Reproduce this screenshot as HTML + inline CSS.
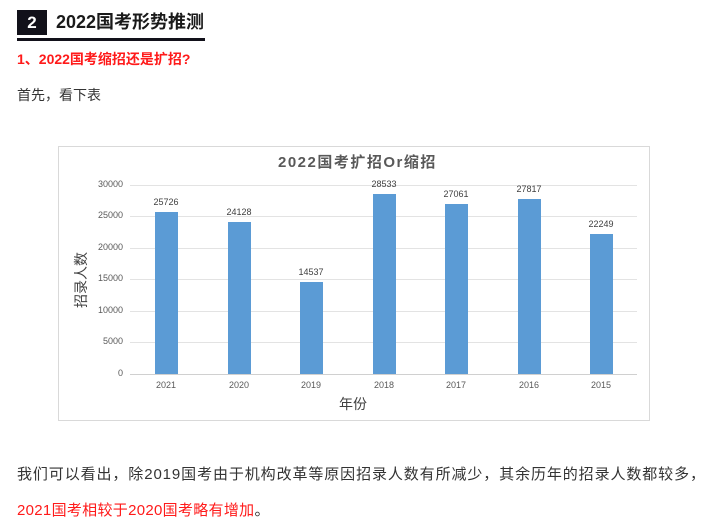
<!DOCTYPE html>
<html><head><meta charset="utf-8"><style>
body{margin:0;width:704px;height:526px;background:#fff;position:relative;overflow:hidden;font-family:"Liberation Sans","Noto Sans CJK SC",sans-serif;}
.a{position:absolute;white-space:nowrap;}
.g{position:absolute;left:130px;width:507px;height:1px;background:#e3e3e3;}
.yl{position:absolute;right:581px;font-size:9px;color:#595959;}
.bar{position:absolute;width:23px;background:#5b9bd5;}
.v{position:absolute;font-size:9px;color:#404040;width:50px;text-align:center;}
.x{position:absolute;top:380px;font-size:9px;color:#595959;width:50px;text-align:center;}
</style></head><body>
<div class="a" style="left:17px;top:10px;width:30px;height:25px;background:#12111a;color:#fff;font-weight:bold;font-size:17px;text-align:center;line-height:25px;">2</div>
<div class="a" style="left:56px;top:9px;font-weight:bold;font-size:18px;color:#1a1a1a;line-height:27px;">2022国考形势推测</div>
<div class="a" style="left:17px;top:38px;width:188px;height:3px;background:#12111a;"></div>
<div class="a" style="left:17px;top:49px;font-weight:bold;font-size:14px;color:#ff1a1a;line-height:20px;">1、2022国考缩招还是扩招?</div>
<div class="a" style="left:17px;top:85px;font-size:14px;color:#333;line-height:20px;">首先，看下表</div>

<div class="a" style="left:58px;top:146px;width:592px;height:275px;border:1px solid #d9d9d9;box-sizing:border-box;"></div>
<div class="a" style="left:278px;top:151px;font-weight:bold;font-size:15px;color:#595959;letter-spacing:1.5px;">2022国考扩招Or缩招</div>
<div class="g" style="top:185px"></div><div class="yl" style="top:179px">30000</div>
<div class="g" style="top:216px"></div><div class="yl" style="top:210px">25000</div>
<div class="g" style="top:248px"></div><div class="yl" style="top:242px">20000</div>
<div class="g" style="top:279px"></div><div class="yl" style="top:273px">15000</div>
<div class="g" style="top:311px"></div><div class="yl" style="top:305px">10000</div>
<div class="g" style="top:342px"></div><div class="yl" style="top:336px">5000</div>
<div class="g" style="top:374px;background:#d0d0d0"></div><div class="yl" style="top:368px">0</div>
<div class="a" style="left:51px;top:271px;width:60px;text-align:center;transform:rotate(-90deg);font-size:14px;color:#404040;line-height:18px;">招录人数</div>

<div class="bar" style="left:155px;top:212px;height:162px"></div><div class="v" style="left:141px;top:197px">25726</div><div class="x" style="left:141px">2021</div>
<div class="bar" style="left:228px;top:222px;height:152px"></div><div class="v" style="left:214px;top:207px">24128</div><div class="x" style="left:214px">2020</div>
<div class="bar" style="left:300px;top:282px;height:92px"></div><div class="v" style="left:286px;top:267px">14537</div><div class="x" style="left:286px">2019</div>
<div class="bar" style="left:373px;top:194px;height:180px"></div><div class="v" style="left:359px;top:179px">28533</div><div class="x" style="left:359px">2018</div>
<div class="bar" style="left:445px;top:204px;height:170px"></div><div class="v" style="left:431px;top:189px">27061</div><div class="x" style="left:431px">2017</div>
<div class="bar" style="left:518px;top:199px;height:175px"></div><div class="v" style="left:504px;top:184px">27817</div><div class="x" style="left:504px">2016</div>
<div class="bar" style="left:590px;top:234px;height:140px"></div><div class="v" style="left:576px;top:219px">22249</div><div class="x" style="left:576px">2015</div>
<div class="a" style="left:339px;top:394px;font-size:14px;color:#404040;">年份</div>

<div class="a" style="left:17px;top:465px;font-size:15px;color:#333;line-height:20px;letter-spacing:0.9px;">我们可以看出，除2019国考由于机构改革等原因招录人数有所减少，其余历年的招录人数都较多，</div>
<div class="a" style="left:17px;top:501px;font-size:15px;color:#ff1a1a;line-height:20px;letter-spacing:0.3px;">2021国考相较于2020国考略有增加<span style="color:#333">。</span></div>
</body></html>
